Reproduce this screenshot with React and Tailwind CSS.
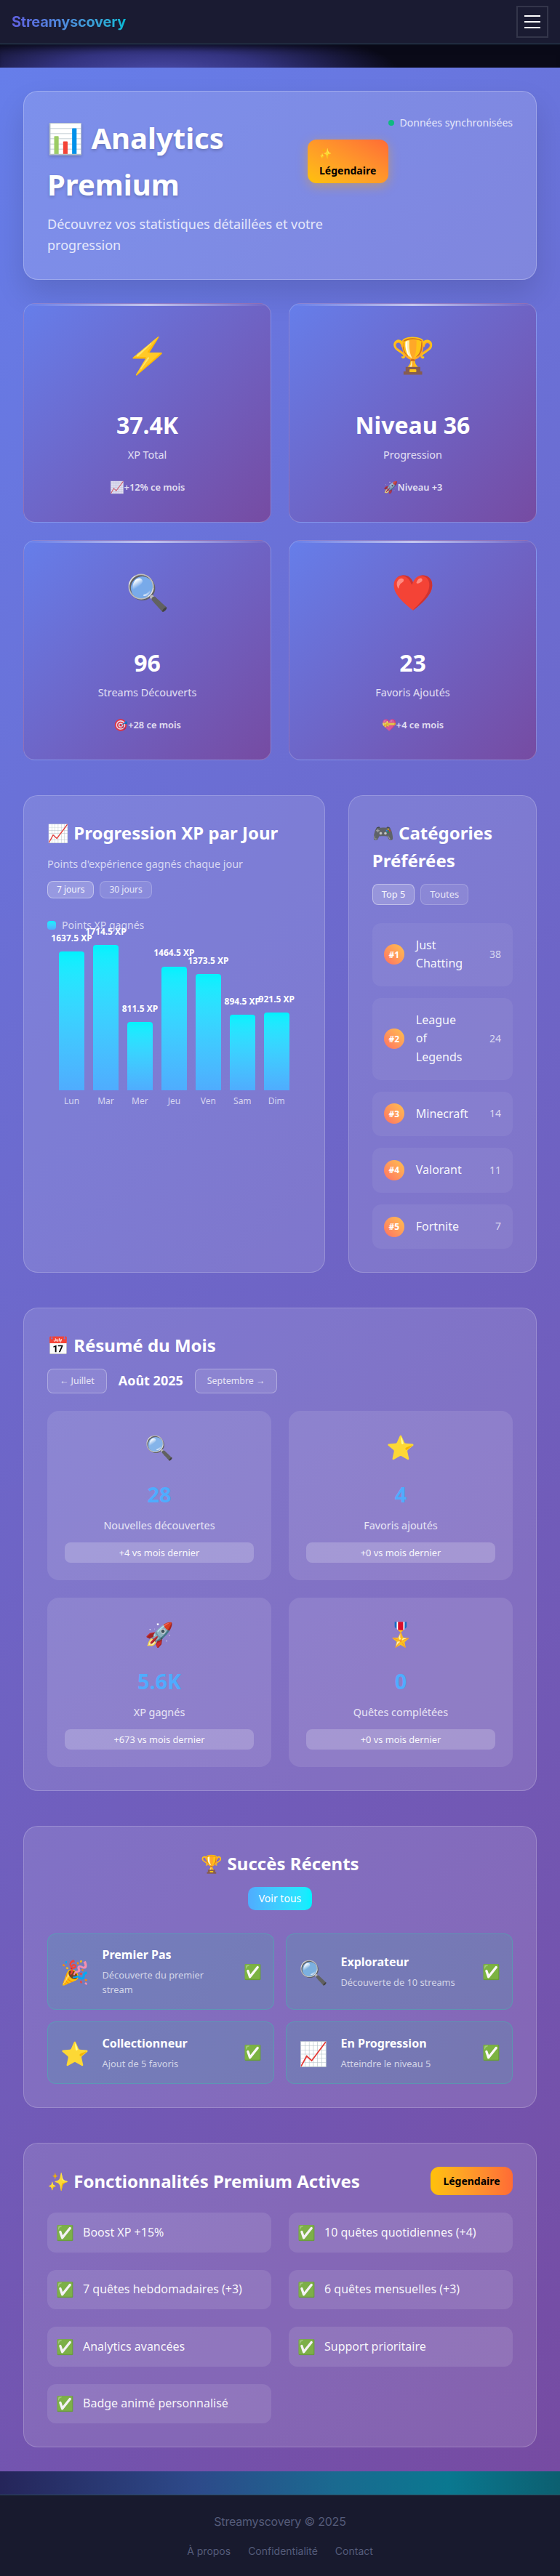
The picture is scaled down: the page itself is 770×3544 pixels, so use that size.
import React from "react";

const stats = [
  { icon: "⚡", value: "37.4K", label: "XP Total", changeIcon: "📈", change: "+12% ce mois" },
  { icon: "🏆", value: "Niveau 36", label: "Progression", changeIcon: "🚀", change: "Niveau +3" },
  { icon: "🔍", value: "96", label: "Streams Découverts", changeIcon: "🎯", change: "+28 ce mois" },
  { icon: "❤️", value: "23", label: "Favoris Ajoutés", changeIcon: "💝", change: "+4 ce mois" },
];

const days = [
  { day: "Lun", xp: 1637.5 },
  { day: "Mar", xp: 1714.5 },
  { day: "Mer", xp: 811.5 },
  { day: "Jeu", xp: 1464.5 },
  { day: "Ven", xp: 1373.5 },
  { day: "Sam", xp: 894.5 },
  { day: "Dim", xp: 921.5 },
];

const categories = [
  { name: "Just Chatting", count: 38 },
  { name: "League of Legends", count: 24 },
  { name: "Minecraft", count: 14 },
  { name: "Valorant", count: 11 },
  { name: "Fortnite", count: 7 },
];

const summary = [
  { icon: "🔍", value: "28", label: "Nouvelles découvertes", diff: "+4 vs mois dernier" },
  { icon: "⭐", value: "4", label: "Favoris ajoutés", diff: "+0 vs mois dernier" },
  { icon: "🚀", value: "5.6K", label: "XP gagnés", diff: "+673 vs mois dernier" },
  { icon: "🎖️", value: "0", label: "Quêtes complétées", diff: "+0 vs mois dernier" },
];

const achievements = [
  { icon: "🎉", title: "Premier Pas", desc: "Découverte du premier stream" },
  { icon: "🔍", title: "Explorateur", desc: "Découverte de 10 streams" },
  { icon: "⭐", title: "Collectionneur", desc: "Ajout de 5 favoris" },
  { icon: "📈", title: "En Progression", desc: "Atteindre le niveau 5" },
];

const features = [
  "Boost XP +15%",
  "10 quêtes quotidiennes (+4)",
  "7 quêtes hebdomadaires (+3)",
  "6 quêtes mensuelles (+3)",
  "Analytics avancées",
  "Support prioritaire",
  "Badge animé personnalisé",
];

const panel = "rounded-[20px] border border-white/20 bg-white/[0.12] p-8";

function App() {
  return (
    <div className="min-h-screen bg-[#0a0a14] font-['Noto_Sans',sans-serif] text-[16px] leading-[1.6] text-white">
      <header className="flex h-[61px] items-center justify-between border-b border-[#2c4a5a] bg-[#1a1b32] px-4">
        <span className="bg-gradient-to-r from-[#5f5fe0] to-[#00b8d4] bg-clip-text font-['Inter',sans-serif] text-[20px] font-bold tracking-[-0.25px] text-transparent">
          Streamyscovery
        </span>
        <button className="flex h-[44px] w-[44px] flex-col items-center justify-center gap-[6px] border-2 border-[#33354a]">
          <span className="h-[2px] w-[22px] bg-white" />
          <span className="h-[2px] w-[22px] bg-white" />
          <span className="h-[2px] w-[22px] bg-white" />
        </button>
      </header>

      <div className="h-[32px] bg-[radial-gradient(ellipse_330px_70px_at_220px_40px,#4a4aa8_0%,#33337f_45%,#0a0a18_100%)] shadow-[inset_0_10px_10px_-6px_rgba(10,10,24,0.9)]" />

      <main className="flex flex-col gap-8 bg-[linear-gradient(135deg,#667eea,#764ba2)] p-8 pb-[33px]">
        <section className="relative flex items-start justify-between rounded-[20px] border border-white/25 bg-white/15 p-8 shadow-[0_20px_40px_rgba(0,0,0,0.12)]">
          <div className="w-[391px]">
            <h1 className="mb-2 text-[40px] font-bold [text-shadow:0_2px_4px_rgba(0,0,0,0.2)]">📊 Analytics Premium</h1>
            <p className="text-[18px] text-white/80">Découvrez vos statistiques détaillées et votre progression</p>
          </div>
          <div className="flex items-center gap-2 text-[14px] text-white/80">
            <span className="h-2 w-2 rounded-full bg-[#10b981]" />
            Données synchronisées
          </div>
          <div className="absolute left-[390px] top-[66px] h-[60px] w-[111px] rounded-xl bg-gradient-to-tr from-[#ffc107] to-[#ff6b35] px-4 py-[6px] text-[14px] font-bold text-black shadow-[0_4px_15px_rgba(255,165,0,0.4)]">
            <div className="leading-[26px]">✨</div>
            <div className="leading-[22px]">Légendaire</div>
          </div>
        </section>

        <section className="grid grid-cols-2 gap-6">
          {stats.map((s) => (
            <div
              key={s.label}
              className="relative overflow-hidden rounded-[16px] border border-white/20 bg-[linear-gradient(135deg,#667eea,#764ba2)] pb-[38px] pt-8 text-center"
            >
              <div className="absolute left-0 right-0 top-0 h-[3px] bg-gradient-to-r from-transparent via-white/60 to-transparent" />
              <div className="mb-[32.6px] text-[48px]">{s.icon}</div>
              <div className="text-[32px] font-bold">{s.value}</div>
              <div className="mt-1 text-[14.4px] text-white/80">{s.label}</div>
              <div className="mt-[24px] flex h-[19px] items-center justify-center text-[12.8px] font-semibold text-white/80">
                <span className="text-[16px]">{s.changeIcon}</span>
                {s.change}
              </div>
            </div>
          ))}
        </section>

        <section className="mt-4 grid grid-cols-[1.6fr_1fr] gap-8">
          <div className={panel}>
            <h2 className="text-[24px] font-bold">📈 Progression XP par Jour</h2>
            <p className="mb-3 mt-3 text-[14.4px] text-white/70">Points d'expérience gagnés chaque jour</p>
            <div className="flex gap-2">
              <button className="h-[24px] rounded-lg border border-white/40 bg-white/20 px-3 text-[12px] leading-none text-white/90">7 jours</button>
              <button className="h-[24px] rounded-lg border border-white/20 bg-white/10 px-3 text-[12px] leading-none text-white/80">30 jours</button>
            </div>
            <div className="mt-[26px] flex items-center gap-2 text-[14px] text-white/70">
              <span className="h-3 w-3 rounded-sm bg-gradient-to-b from-[#00f2fe] to-[#4facfe]" />
              Points XP gagnés
            </div>
            <div className="flex h-[240px] gap-3 px-4">
              {days.map((d) => (
                <div key={d.day} className="flex flex-1 flex-col justify-end">
                  <div
                    className="relative rounded-t bg-gradient-to-b from-[#00f2fe] to-[#4facfe]"
                    style={{ height: (d.xp / 1714.5) * 200 }}
                  >
                    <span className="absolute bottom-full left-1/2 mb-[9px] -translate-x-1/2 whitespace-nowrap text-[12px] font-bold">
                      {d.xp} XP
                    </span>
                  </div>
                  <div className="mt-[5px] text-center text-[12px] text-white/70">{d.day}</div>
                </div>
              ))}
            </div>
          </div>

          <div className={panel}>
            <h2 className="text-[24px] font-bold">🎮 Catégories Préférées</h2>
            <div className="mt-3 flex gap-2">
              <button className="h-[29px] rounded-lg border border-white/40 bg-white/20 px-3 text-[12.8px] leading-none text-white/90">Top 5</button>
              <button className="h-[29px] rounded-lg border border-white/20 bg-white/10 px-3 text-[12.8px] leading-none text-white/80">Toutes</button>
            </div>
            <div className="mt-[25px] flex flex-col gap-4">
              {categories.map((c, i) => (
                <div key={c.name} className="flex items-center gap-4 rounded-xl bg-white/[0.06] px-4 py-[18px]">
                  <span className="-my-1 flex h-7 w-7 shrink-0 items-center justify-center rounded-full bg-gradient-to-tr from-[#ff6f61] to-[#ffc04d] text-[12px] font-bold">
                    #{i + 1}
                  </span>
                  <span className="w-[73px] text-[16px] text-white/95">{c.name}</span>
                  <span className="ml-auto text-[14px] text-white/70">{c.count}</span>
                </div>
              ))}
            </div>
          </div>
        </section>

        <section className={`${panel} mt-4`}>
          <h2 className="text-[24px] font-bold">📅 Résumé du Mois</h2>
          <div className="mt-3 flex items-center gap-4">
            <button className="h-[34px] rounded-lg border border-white/30 bg-white/10 px-4 text-[12.4px] leading-none text-white/80">← Juillet</button>
            <span className="text-[18px] font-bold">Août 2025</span>
            <button className="h-[34px] rounded-lg border border-white/30 bg-white/10 px-4 text-[12.4px] leading-none text-white/80">Septembre →</button>
          </div>
          <div className="mt-6 grid grid-cols-2 gap-6">
            {summary.map((m) => (
              <div key={m.label} className="rounded-2xl bg-white/10 p-6 text-center">
                <div className="mb-[17px] text-[32px]">{m.icon}</div>
                <div className="text-[28.8px] font-bold text-[#4facfe]">{m.value}</div>
                <div className="mt-2 text-[14.4px] text-white/80">{m.label}</div>
                <div className="mt-3 flex h-7 items-center justify-center rounded-lg bg-white/20 text-[12.8px] text-white/95">{m.diff}</div>
              </div>
            ))}
          </div>
        </section>

        <section className={`${panel} mt-4`}>
          <h2 className="text-center text-[24px] font-bold">🏆 Succès Récents</h2>
          <div className="mt-3 flex justify-center">
            <button className="h-[32px] w-[88px] rounded-[10px] bg-gradient-to-r from-[#4facfe] to-[#00f2fe] text-[14px] leading-none">Voir tous</button>
          </div>
          <div className="mt-8 grid grid-cols-2 gap-4">
            {achievements.map((a) => (
              <div key={a.title} className="flex items-center rounded-xl border border-[rgba(0,255,170,0.22)] bg-[rgba(0,255,140,0.1)] p-[16.5px]">
                <span className="mr-[18px] text-[32px]">{a.icon}</span>
                <div className="max-w-[170px] flex-1">
                  <div className="mb-1 text-[16px] font-bold">{a.title}</div>
                  <div className="text-[12.8px] text-white/70">{a.desc}</div>
                </div>
                <span className="ml-auto text-[20px]">✅</span>
              </div>
            ))}
          </div>
        </section>

        <section className={`${panel} mt-4`}>
          <div className="flex items-center justify-between">
            <h2 className="text-[24px] font-bold">✨ Fonctionnalités Premium Actives</h2>
            <span className="flex h-[39px] w-[113px] items-center justify-center rounded-xl bg-gradient-to-r from-[#ffc107] to-[#ff6b35] text-[14px] font-bold text-black">Légendaire</span>
          </div>
          <div className="mt-6 grid grid-cols-2 gap-6">
            {features.map((f) => (
              <div key={f} className="flex h-[54.5px] items-center gap-3 rounded-xl bg-white/10 px-3 text-[16px] text-white/95">
                <span className="text-[20px]">✅</span>
                {f}
              </div>
            ))}
          </div>
        </section>
      </main>

      <div className="h-[32px] bg-[linear-gradient(90deg,#25255a,#2d4a8a_35%,#1a6a90_60%,#0a7890_80%,#0c5f70)]" />

      <footer className="flex h-[113px] flex-col items-center border-t border-[#2c4a5a] bg-[#181a2e] pt-[24px] font-['Inter',sans-serif] text-[#555c7a]">
        <div className="text-[16px] tracking-[-0.2px]">Streamyscovery © 2025</div>
        <div className="mt-4 flex gap-6 text-[14px]">
          <span>À propos</span>
          <span>Confidentialité</span>
          <span>Contact</span>
        </div>
      </footer>
    </div>
  );
}

export default App;
